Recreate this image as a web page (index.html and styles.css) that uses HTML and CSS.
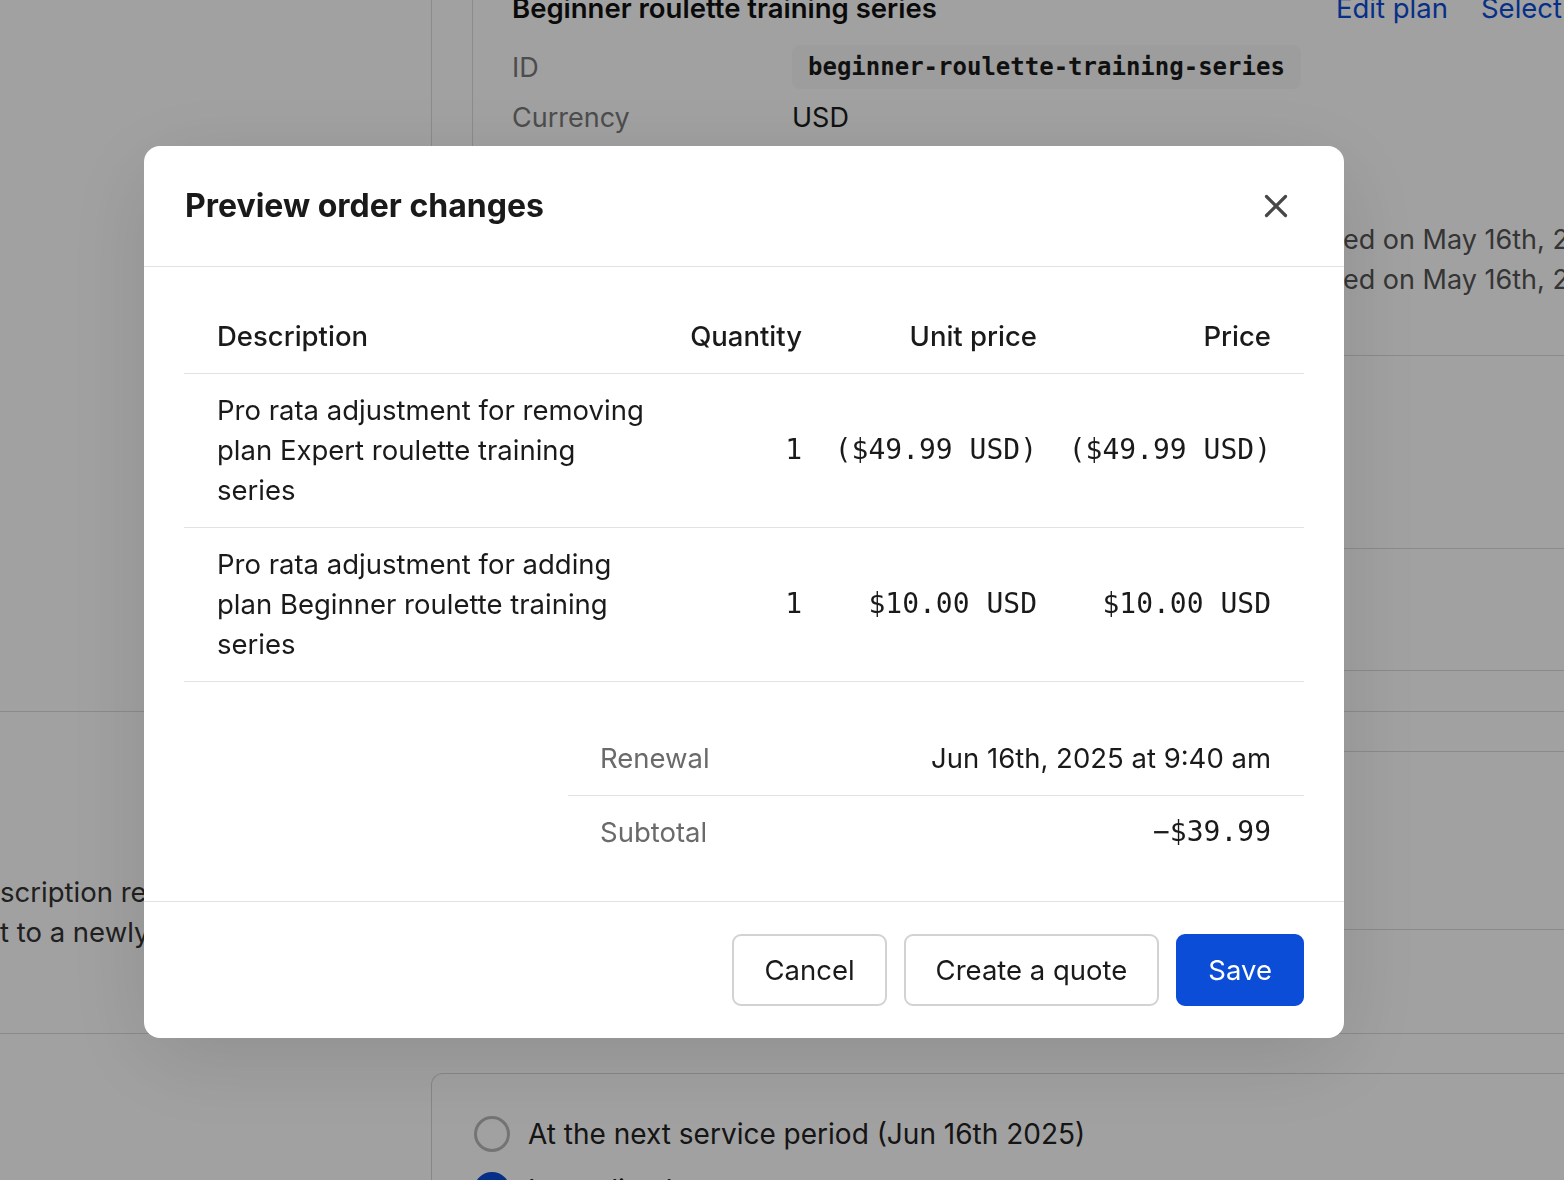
FILE: index.html
```html
<!DOCTYPE html>
<html lang="en">
<head>
<meta charset="utf-8">
<title>Preview order changes</title>
<link rel="stylesheet" href="styles.css">
</head>
<body>
<div class="page">
  <section class="top-row">
    <div class="side-col"></div>
    <div class="main-col">
      <div class="plan-card">
        <div class="plan-head">
          <h2 class="plan-title">Beginner roulette training series</h2>
          <div class="plan-links"><a class="link">Edit plan</a><a class="link">Select</a></div>
        </div>
        <div class="props">
          <div class="prop"><span class="prop-label">ID</span><span class="prop-value"><code class="pill">beginner-roulette-training-series</code></span></div>
          <div class="prop"><span class="prop-label">Currency</span><span class="prop-value">USD</span></div>
        </div>
        <div class="dates">
          <div class="date-line"><span class="pre">Creat</span>ed on May 16th, 2025</div>
          <div class="date-line"><span class="pre">Updat</span>ed on May 16th, 2025</div>
        </div>
        <div class="bg-row h55"></div>
        <div class="bg-row h192"></div>
        <div class="bg-row h121"></div>
      </div>
    </div>
  </section>
  <section class="form-row">
    <div class="form-label">
      <div class="form-line">scription renews automatically</div>
      <div class="form-line">t to a newly created invoice</div>
    </div>
    <div class="form-fields">
      <div class="bg-row h39"></div>
      <div class="bg-row h177"></div>
    </div>
  </section>
  <section class="bottom-row">
    <div class="side-spacer"></div>
    <div class="option-card">
      <label class="option"><span class="radio"></span><span>At the next service period (Jun 16th 2025)</span></label>
      <label class="option"><span class="radio checked"></span><span>Immediately</span></label>
    </div>
  </section>
</div>

<div class="overlay"></div>

<div class="modal" role="dialog" aria-labelledby="modal-title">
  <header class="modal-header">
    <h1 class="modal-title" id="modal-title">Preview order changes</h1>
    <button class="close-btn" aria-label="Close">
      <svg width="24" height="24" viewBox="0 0 24 24" fill="none" stroke="#474747" stroke-width="3.2" stroke-linecap="round"><path d="M2.5 2.5 L21.5 21.5 M21.5 2.5 L2.5 21.5"/></svg>
    </button>
  </header>
  <div class="modal-body">
    <table class="items">
      <colgroup><col class="c1"><col class="c2"><col class="c3"><col class="c4"></colgroup>
      <thead>
        <tr><th class="desc">Description</th><th class="num">Quantity</th><th class="num">Unit price</th><th class="num last">Price</th></tr>
      </thead>
      <tbody>
        <tr>
          <td class="desc">Pro rata adjustment for removing plan Expert roulette training series</td>
          <td class="num mono">1</td>
          <td class="num mono">($49.99 USD)</td>
          <td class="num mono last">($49.99 USD)</td>
        </tr>
        <tr>
          <td class="desc">Pro rata adjustment for adding plan Beginner roulette training series</td>
          <td class="num mono">1</td>
          <td class="num mono">$10.00 USD</td>
          <td class="num mono last">$10.00 USD</td>
        </tr>
      </tbody>
    </table>
    <div class="summary">
      <div class="sum-row"><span class="sum-label">Renewal</span><span class="sum-value">Jun 16th, 2025 at 9:40 am</span></div>
      <div class="sum-row"><span class="sum-label">Subtotal</span><span class="sum-value mono">−$39.99</span></div>
    </div>
  </div>
  <footer class="modal-footer">
    <button class="btn">Cancel</button>
    <button class="btn">Create a quote</button>
    <button class="btn primary">Save</button>
  </footer>
</div>
</body>
</html>
```
FILE: styles.css
```css
* { box-sizing: border-box; }
html, body { margin: 0; padding: 0; }
body {
  width: 1564px;
  height: 1180px;
  overflow: hidden;
  background: #ffffff;
  font-family: Inter, "Noto Sans", "Liberation Sans", sans-serif;
  color: #1a1a1a;
}

/* ---------- background page ---------- */
.page { margin-top: -12px; }

.top-row {
  display: grid;
  grid-template-columns: 432px 1fr;
  height: 724px;
  border-bottom: 1px solid #dcdcdc;
}
.side-col { border-right: 1px solid #dcdcdc; }
.main-col { padding-left: 40px; }
.plan-card {
  height: 100%;
  border-left: 1px solid #dcdcdc;
  padding-left: 39px;
}
.plan-head {
  display: grid;
  grid-template-columns: 824px auto;
  height: 40px;
  align-items: center;
}
.plan-title {
  margin: 0;
  font-size: 27.5px;
  line-height: 40px;
  font-weight: 600;
  color: #111;
  white-space: nowrap;
}
.plan-links { display: flex; gap: 33px; white-space: nowrap; }
.link { color: #0b4dd6; font-size: 27.5px; line-height: 40px; }
.props { margin-top: 14px; }
.prop { display: flex; align-items: center; height: 50px; font-size: 27px; }
.prop-label { width: 280px; color: #7a7a7a; }
.prop-value { color: #1a1a1a; }
.pill {
  display: inline-block;
  background: #f9f9f9;
  border-radius: 8px;
  padding: 2px 16px;
  line-height: 40px;
  font-family: "DejaVu Sans Mono", "Liberation Mono", monospace;
  font-weight: 700;
  font-size: 24px;
}
.dates { margin-top: 78px; padding-left: 631px; }
.date-line { font-size: 27px; line-height: 40px; color: #555; white-space: nowrap; }
.pre { display: inline-block; width: 200px; text-align: right; }
.bg-row { border-bottom: 1px solid #dcdcdc; }
.h55 { height: 56px; }
.h192 { height: 193px; }
.h121 { height: 122px; }
.h39 { height: 40px; }
.h177 { height: 178px; }

.form-row {
  display: grid;
  grid-template-columns: 432px 1fr;
  height: 322px;
  border-bottom: 1px solid #dcdcdc;
}
.form-label { padding-top: 160px; }
.form-line { font-size: 27.5px; line-height: 40px; color: #333; white-space: nowrap; }

.bottom-row {
  display: grid;
  grid-template-columns: 431px 1fr;
  margin-top: 39px;
}
.option-card {
  border: 1px solid #d6d6d6;
  border-right: none;
  border-radius: 12px 0 0 0;
  padding: 40px 42px;
  display: flex;
  flex-direction: column;
  gap: 16px;
}
.option { display: flex; align-items: center; gap: 18px; font-size: 28px; line-height: 40px; color: #222; }
.radio {
  width: 36px; height: 36px;
  border-radius: 50%;
  border: 3px solid #b8b8b8;
  background: #fff;
  flex: none;
}
.radio.checked { border-color: #0b4dd6; background: #0b4dd6; }

/* ---------- overlay & modal ---------- */
.overlay {
  position: fixed;
  inset: 0;
  background: rgba(0, 0, 0, 0.37);
}
.modal {
  position: fixed;
  left: 144px;
  top: 146px;
  width: 1200px;
  background: #fff;
  border-radius: 16px;
  box-shadow: 0 20px 90px rgba(0, 0, 0, 0.12);
  overflow: hidden;
}
.modal-header {
  display: flex;
  align-items: center;
  justify-content: space-between;
  padding: 40px 48px 40px 41px;
  border-bottom: 1px solid #e2e2e2;
}
.modal-title {
  margin: 0;
  font-size: 32px;
  line-height: 40px;
  font-weight: 700;
  color: #1a1a1a;
}
.close-btn {
  width: 40px; height: 40px;
  border: none; background: none; padding: 0;
  display: flex; align-items: center; justify-content: center;
}
.modal-body { padding: 33px 40px 32px; }

.items {
  width: 1120px;
  border-collapse: collapse;
  table-layout: fixed;
  font-size: 27.5px;
  line-height: 40px;
}
.c1 { width: 476px; }
.c2 { width: 158px; }
.c3 { width: 235px; }
.c4 { width: 251px; }
.items th, .items td {
  padding: 16px 16px 17px 0;
  border-bottom: 1px solid #e2e2e2;
  vertical-align: middle;
}
.items th { font-weight: 500; text-align: left; color: #1a1a1a; }
.items td { font-weight: 400; color: #1a1a1a; }
.items .desc { padding-left: 33px; padding-right: 6px; text-align: left; }
.items .num { text-align: right; white-space: nowrap; }
.items .last { padding-right: 33px; }
.mono {
  font-family: "DejaVu Sans Mono", "Liberation Mono", monospace;
  font-size: 28px;
}

.summary { width: 736px; margin: 40px 0 0 auto; }
.sum-row {
  display: flex;
  justify-content: space-between;
  padding: 16px 33px 17px 32px;
  font-size: 27.5px;
  line-height: 40px;
}
.sum-row + .sum-row { border-top: 1px solid #e2e2e2; }
.sum-label { color: #6a6a6a; }
.sum-value { color: #1a1a1a; }

.modal-footer {
  display: flex;
  justify-content: flex-end;
  gap: 17px;
  padding: 32px 40px;
  border-top: 1px solid #e2e2e2;
}
.btn {
  height: 72px;
  padding: 0 30px;
  border: 2px solid #d2d2d2;
  border-radius: 9px;
  background: #fff;
  font-family: Inter, "Noto Sans", "Liberation Sans", sans-serif;
  font-size: 27.5px;
  color: #1a1a1a;
}
.btn.primary {
  background: #0b4dd6;
  border-color: #0b4dd6;
  color: #fff;
}
```
